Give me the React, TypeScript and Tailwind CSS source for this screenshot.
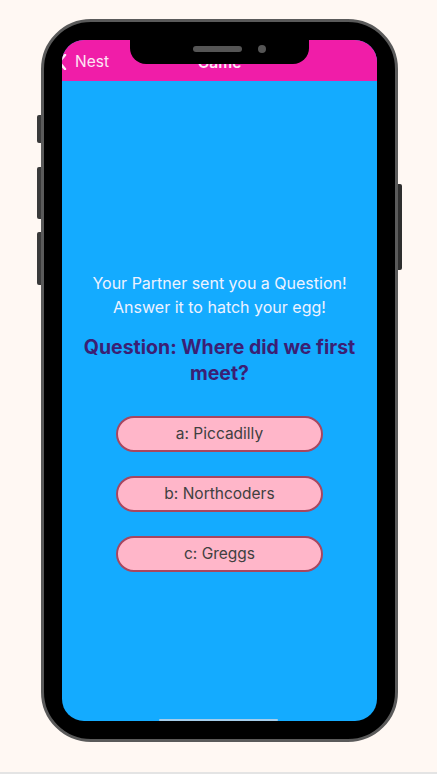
import React from "react";

export default function App() {
  const answers = ["a: Piccadilly", "b: Northcoders", "c: Greggs"];
  return (
    <div
      className="w-[437px] h-[774px] bg-[#fff8f3] overflow-hidden flex flex-col"
      style={{ fontFamily: "Inter, 'Noto Sans', sans-serif" }}
    >
      <div className="flex-1 pt-[19px] pl-[41px]">
        <div className="relative w-[357px] h-[723px] rounded-[50px] border-[3px] border-[#5a5a5a] bg-black p-[18px]">
          {/* side buttons */}
          <div className="absolute left-[-7px] top-[93px] w-[4px] h-[28px] rounded-l-[2px] bg-[#3a3a3a]" />
          <div className="absolute left-[-7px] top-[145px] w-[4px] h-[52px] rounded-l-[2px] bg-[#3a3a3a]" />
          <div className="absolute left-[-7px] top-[210px] w-[4px] h-[53px] rounded-l-[2px] bg-[#3a3a3a]" />
          <div className="absolute right-[-7px] top-[162px] w-[4px] h-[86px] rounded-r-[2px] bg-[#2e2e2e]" />

          <div className="relative w-[315px] h-[681px] rounded-[22px] overflow-hidden bg-[#14abff] flex flex-col">
            {/* header */}
            <div className="h-[41px] bg-[#f01da8] flex items-end pb-[11px] relative">
              <div className="flex items-center text-[#fde6f4] text-[15.5px] leading-none">
                <svg width="10" height="16" viewBox="0 0 10 16" className="ml-[-5px] mr-[8px]">
                  <path d="M8 1 L2 8 L8 15" fill="none" stroke="#fde6f4" strokeWidth="2.5" strokeLinecap="round" strokeLinejoin="round" />
                </svg>
                <span>Nest</span>
              </div>
              <div className="absolute left-0 right-0 bottom-[11px] text-center text-[#fde6f4] text-[15.5px] font-semibold leading-none">
                Game
              </div>
            </div>

            {/* body */}
            <div className="flex-1 flex flex-col items-center pt-[190px]">
              <p className="text-[#eef2ff] text-[16px] leading-[24px] text-center">
                Your Partner sent you a Question!
                <br />
                Answer it to hatch your egg!
              </p>
              <p className="mt-[15px] text-[#3b1f74] text-[19.5px] font-bold leading-[26px] text-center px-[18px]">
                Question: Where did we first meet?
              </p>
              <div className="mt-[30px] flex flex-col gap-[24px]">
                {answers.map((a) => (
                  <div
                    key={a}
                    className="w-[207px] h-[36px] rounded-full bg-[#ffb6c9] border-2 border-[#a8465f] flex items-center justify-center text-[#404040] text-[15.5px]"
                  >
                    {a}
                  </div>
                ))}
              </div>
            </div>

            {/* home indicator */}
            <div className="absolute bottom-0 left-[97px] w-[119px] h-[2px] bg-[#a6cdea] rounded-full" />
          </div>

          {/* notch */}
          <div className="absolute top-0 left-[86px] w-[179px] h-[42px] bg-black rounded-b-[16px]">
            <div className="absolute left-[63px] top-[24px] w-[49px] h-[6px] rounded-full bg-[#555]" />
            <div className="absolute left-[128px] top-[23px] w-[8px] h-[8px] rounded-full bg-[#555]" />
          </div>
        </div>
      </div>
      <div className="h-[2px] bg-[#e4e4e4]" />
    </div>
  );
}
